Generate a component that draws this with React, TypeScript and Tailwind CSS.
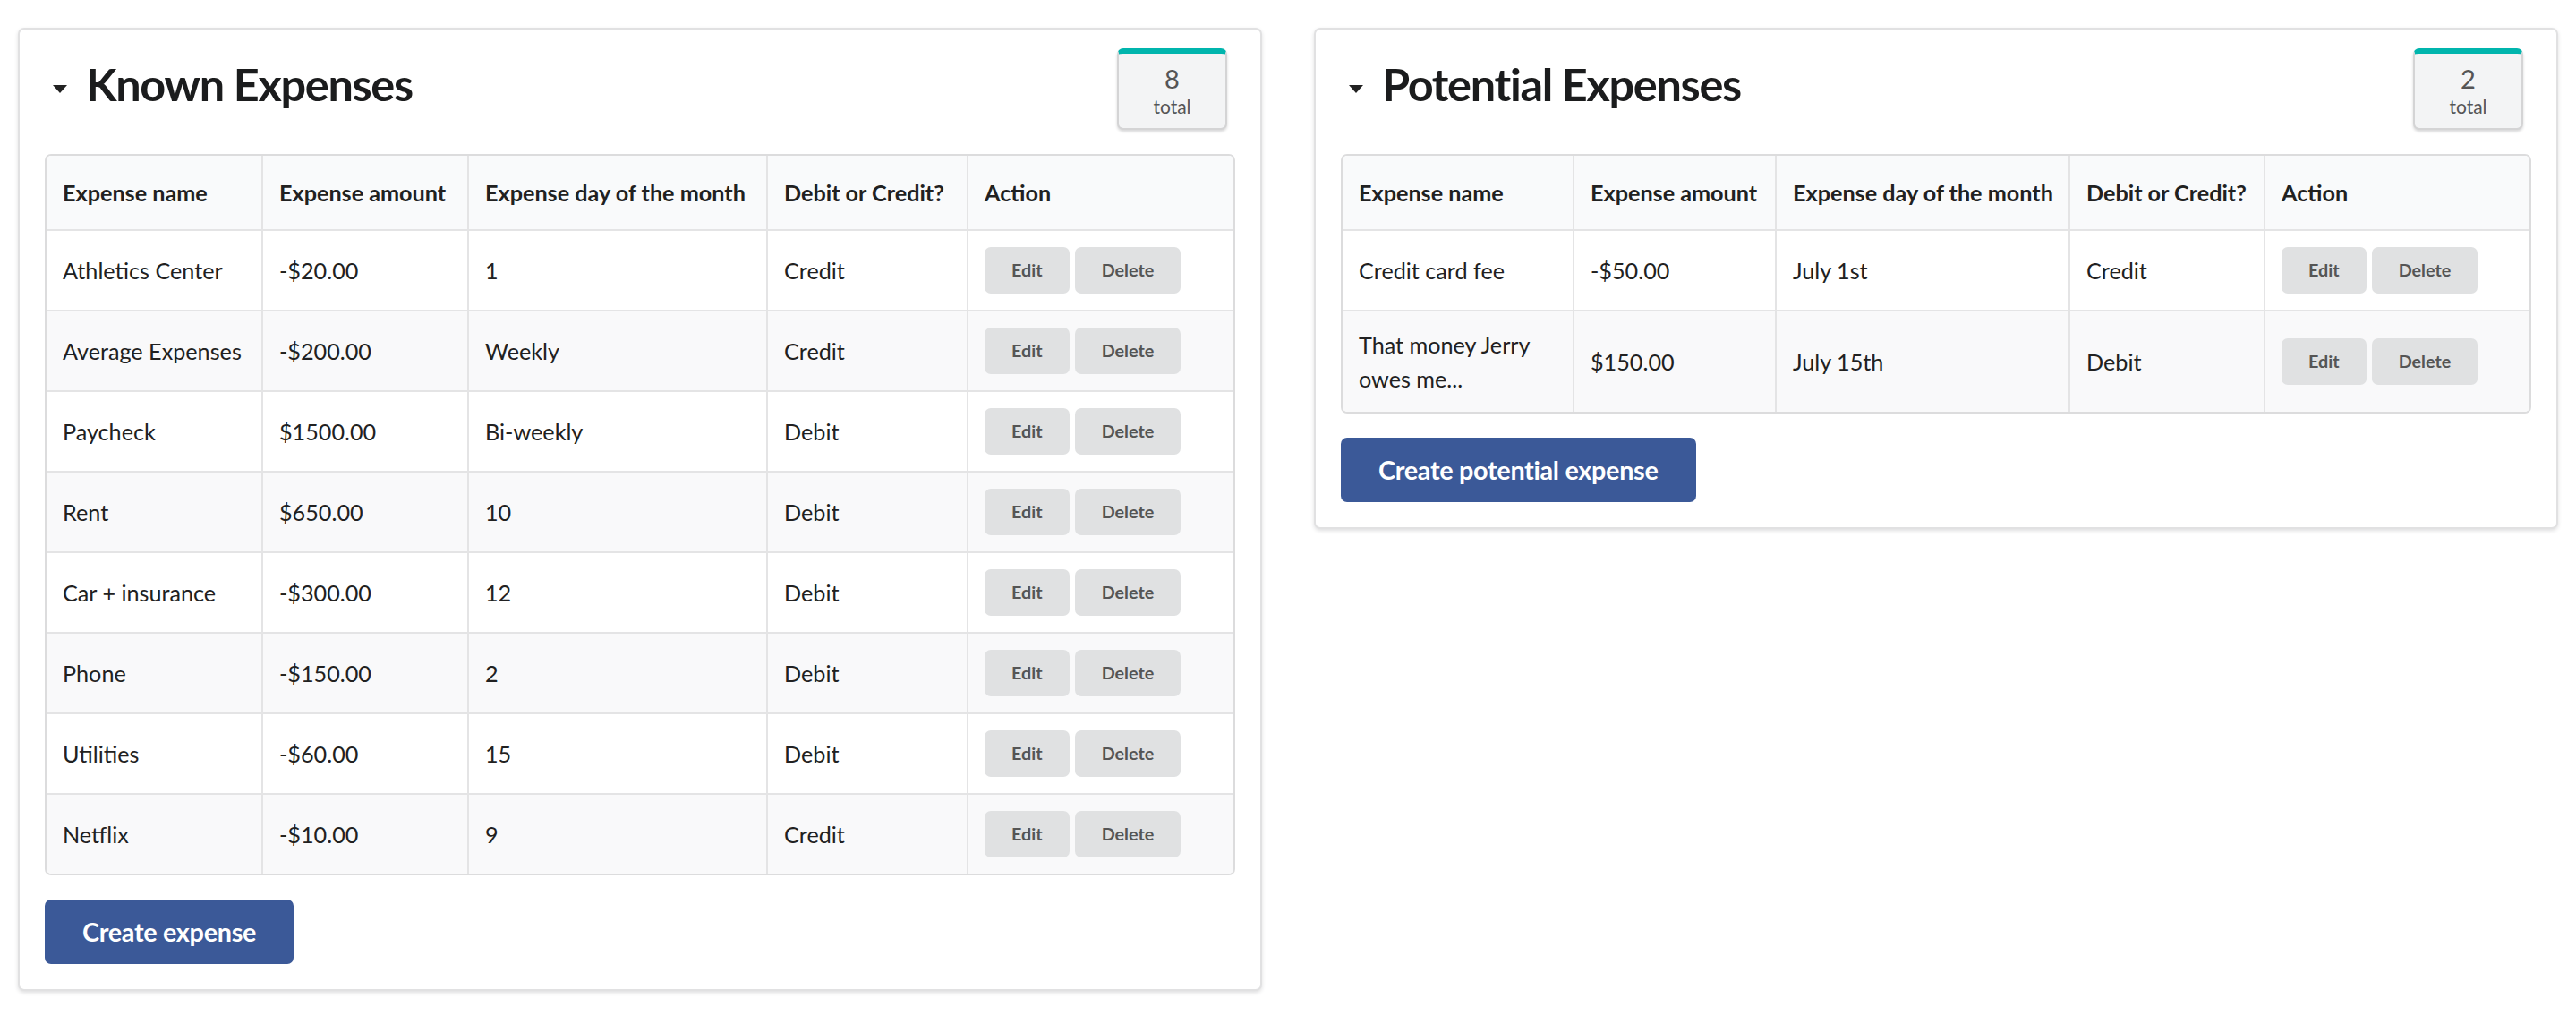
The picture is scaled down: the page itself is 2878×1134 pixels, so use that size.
import React from "react";

type Row = { name: string; amount: string; day: string; kind: string };

const known: Row[] = [
    { name: "Athletics Center", amount: "-$20.00", day: "1", kind: "Credit" },
    { name: "Average Expenses", amount: "-$200.00", day: "Weekly", kind: "Credit" },
    { name: "Paycheck", amount: "$1500.00", day: "Bi-weekly", kind: "Debit" },
    { name: "Rent", amount: "$650.00", day: "10", kind: "Debit" },
    { name: "Car + insurance", amount: "-$300.00", day: "12", kind: "Debit" },
    { name: "Phone", amount: "-$150.00", day: "2", kind: "Debit" },
    { name: "Utilities", amount: "-$60.00", day: "15", kind: "Debit" },
    { name: "Netflix", amount: "-$10.00", day: "9", kind: "Credit" },
];

const potential: Row[] = [
    { name: "Credit card fee", amount: "-$50.00", day: "July 1st", kind: "Credit" },
    { name: "That money Jerry owes me...", amount: "$150.00", day: "July 15th", kind: "Debit" },
];

const headers = ["Expense name", "Expense amount", "Expense day of the month", "Debit or Credit?", "Action"];

const Caret = () => (
    <svg width="16" height="9" viewBox="0 0 16 9" className="ml-[9px] mr-[21px] mt-[11px] shrink-0">
        <polygon points="0,0 16,0 8,9" fill="#222222" />
    </svg>
);

const ExpenseTable = ({ rows, widths }: { rows: Row[]; widths: string[] }) => (
    <div className="border-2 border-[#dcdcdd] rounded-[7px] overflow-hidden">
        <table className="w-full table-fixed border-separate border-spacing-0 text-[25.2px] leading-[38px] text-[#212121]">
            <thead>
                <tr>
                    {headers.map((h, i) => (
                        <th
                            key={h}
                            className={`${widths[i]} ${i > 0 ? "border-l-2" : ""} border-b-2 border-[#e4e4e5] bg-[#f9fafb] px-[18px] py-[22px] text-left font-bold whitespace-nowrap`}
                        >
                            {h}
                        </th>
                    ))}
                </tr>
            </thead>
            <tbody>
                {rows.map((r, idx) => {
                    const last = idx === rows.length - 1;
                    const bg = idx % 2 === 1 ? "bg-[#f9f9fa]" : "bg-white";
                    const cell = `${bg} ${last ? "" : "border-b-2"} border-[#e4e4e5] px-[18px] py-[18px] align-middle`;
                    return (
                        <tr key={r.name}>
                            <td className={cell}>{r.name}</td>
                            <td className={`${cell} border-l-2`}>{r.amount}</td>
                            <td className={`${cell} border-l-2`}>{r.day}</td>
                            <td className={`${cell} border-l-2`}>{r.kind}</td>
                            <td className={`${cell} border-l-2`}>
                                <div className="flex gap-[6px]">
                                    <button className="h-[52px] px-[30px] rounded-[7px] bg-[#e0e1e2] text-[19.8px] font-bold text-[#555555] leading-none">
                                        Edit
                                    </button>
                                    <button className="h-[52px] px-[30px] rounded-[7px] bg-[#e0e1e2] text-[19.8px] font-bold text-[#555555] leading-none">
                                        Delete
                                    </button>
                                </div>
                            </td>
                        </tr>
                    );
                })}
            </tbody>
        </table>
    </div>
);

const ExpenseCard = ({
    title,
    total,
    rows,
    widths,
    action,
}: {
    title: string;
    total: number;
    rows: Row[];
    widths: string[];
    action: string;
}) => (
    <div className="bg-white border-2 border-[#e1e1e2] rounded-[7px] shadow-[0_2px_4px_rgba(34,36,38,0.15)] p-[28px]">
        {/* Header with collapse caret and statistic */}
        <div className="flex justify-between items-start">
            <div className="flex items-center">
                <Caret />
                <h1 className="text-[50.4px] leading-[65px] font-bold tracking-[-1.3px] text-[#1b1c1d]">{title}</h1>
            </div>
            <div className="-mt-[7px] mr-[9px] w-[123px] h-[91px] rounded-[7px] border-2 border-t-[6px] border-[#d4d4d5] border-t-[#00b5ad] bg-[#f3f4f5] shadow-[0_2px_3px_rgba(34,36,38,0.18)] flex flex-col items-center pt-[12px] text-[#555555]">
                <span className="text-[29px] leading-[32px]">{total}</span>
                <span className="text-[21px] leading-[30px]">total</span>
            </div>
        </div>

        <div className="mt-[27px]">
            <ExpenseTable rows={rows} widths={widths} />
        </div>

        <button className="mt-[27px] h-[72px] px-[42px] rounded-[7px] bg-[#3b5998] text-white text-[28.8px] font-bold tracking-[-0.3px] leading-none">
            {action}
        </button>
    </div>
);

export default function App() {
    return (
        <div className="min-h-[1134px] bg-white font-[Lato,sans-serif] px-[20px] pt-[31px]">
            <div className="grid grid-cols-2 gap-[58px] items-start">
                <ExpenseCard
                    title="Known Expenses"
                    total={8}
                    rows={known}
                    widths={["w-[240px]", "w-[230px]", "w-[334px]", "w-[224px]", ""]}
                    action="Create expense"
                />
                <ExpenseCard
                    title="Potential Expenses"
                    total={2}
                    rows={potential}
                    widths={["w-[257px]", "w-[226px]", "w-[328px]", "w-[218px]", ""]}
                    action="Create potential expense"
                />
            </div>
        </div>
    );
}
